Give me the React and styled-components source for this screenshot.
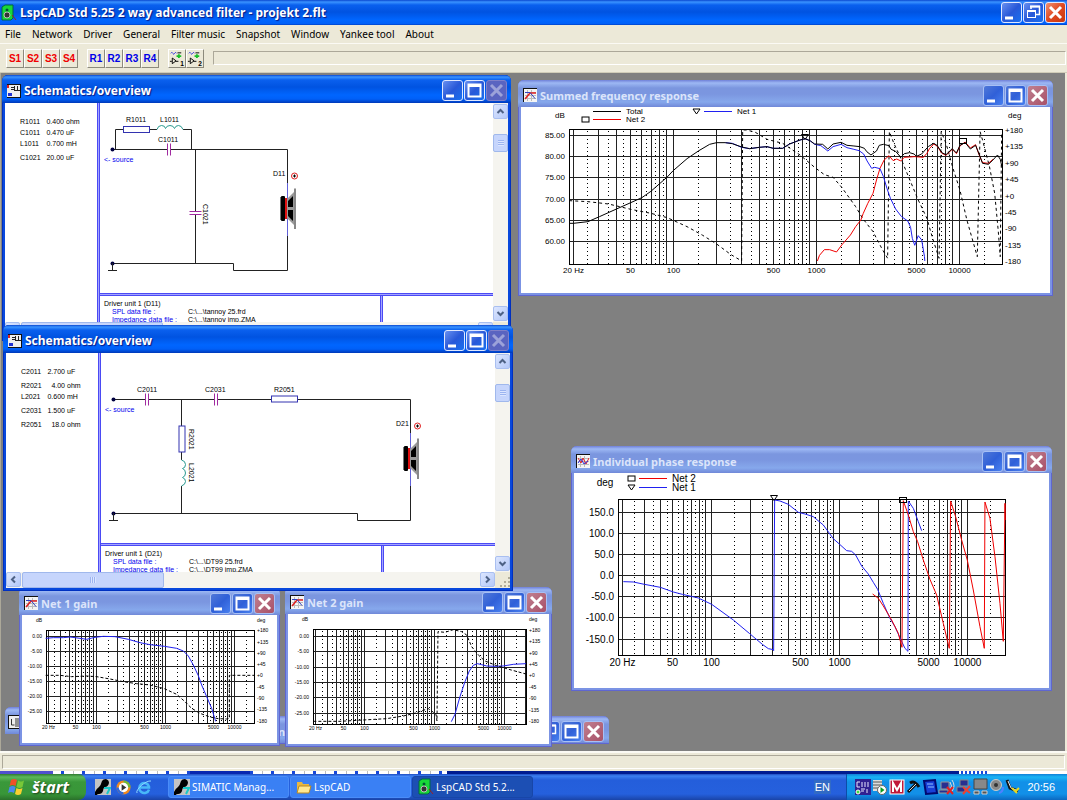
import { styled, createGlobalStyle, css } from "styled-components"

const GlobalStyle = createGlobalStyle`
  * { box-sizing: border-box; }
  body {
    margin: 0;
    background: #808080;
    font-family: "Liberation Sans", Arial, sans-serif;
    font-size: 11px;
    color: #000;
  }
  button { font-family: inherit; padding: 0; cursor: pointer; }
`

const DECADES = [10, 100, 1000, 10000];
const MENU = ["File", "Network", "Driver", "General", "Filter music", "Snapshot", "Window", "Yankee tool", "About"];
const DEGREES = ["+180", "+135", "+90", "+45", "+0", "-45", "-90", "-135", "-180"];

/* frequency plots: box is left, top, right, bottom of the frame */

const SUMMED = {
  box: [48, 22, 481, 157],
  x100: 152, decade: 143, font: 8,
  rows: [["85.00", 28], ["80.00", 49], ["75.00", 70], ["70.00", 92], ["65.00", 113], ["60.00", 134]],
  right: [23, 39, 56, 72, 89, 105, 121, 138, 154],
  unit: ["dB", 34, 11], unitRight: ["deg", 487, 11],
  transform: "translate(-6 -27) scale(0.3476 0.3333)",
  legend: [
    { name: "Total", color: "#000", x: 72, y: 4 },
    { name: "Net 2", color: "#f00000", x: 72, y: 12, mark: "square" },
    { name: "Net 1", color: "#2020f0", x: 183, y: 4, mark: "triangle" },
  ],
  marks: [["triangle", 284, 30], ["square", 442, 34]],
  traces: [
    { color: "#000", dash: "3 3", points: "156,362 210,365 269,372 333,388 391,400 438,413 495,440 540,466 580,492 620,523 652,543 655,150 665,150 690,156 725,178 770,190 820,225 862,262 890,284 915,292 940,322 980,380 1000,415 1030,455 1055,505 1072,535 1077,155 1090,190 1110,235 1130,285 1160,360 1185,415 1200,470 1220,535 1226,155 1240,190 1260,265 1280,330 1300,420 1330,530 1338,155 1345,180 1365,260 1380,340 1390,450 1396,530 1400,160" },
    { color: "#f00000", points: "870,543 876,526 890,509 905,509 925,516 940,495 965,465 980,440 995,420 1002,400 1015,370 1030,340 1040,300 1050,265 1062,240 1076,227 1088,242 1098,237 1110,243 1120,232 1150,230 1175,232 1185,220 1193,205 1205,192 1215,199 1228,220 1240,226 1258,208 1270,221 1280,198 1295,186 1310,204 1325,194 1335,224 1345,248 1362,250 1375,238" },
    { color: "#2020f0", points: "605,188 625,190 652,202 675,206 703,202 725,200 743,205 770,205 790,192 820,180 835,176 850,183 862,193 880,197 900,213 915,200 938,193 955,203 975,208 990,212 1003,222 1013,243 1026,265 1035,262 1050,266 1060,290 1070,325 1080,355 1095,387 1112,410 1130,423 1138,442 1143,475 1150,496 1160,467 1170,480 1178,530 1179,543" },
    { color: "#000", points: "156,430 168,430 210,425 243,410 292,387 333,368 365,353 391,334 415,312 438,291 455,272 495,236 529,212 560,193 580,188 605,188 625,191 652,201 675,206 703,202 725,200 743,205 770,205 790,192 820,180 835,176 850,183 862,192 885,193 900,207 915,192 938,187 955,196 975,198 992,200 1005,205 1012,215 1024,225 1040,213 1048,196 1060,193 1076,197 1082,208 1095,214 1110,232 1120,221 1135,218 1148,222 1155,229 1170,222 1180,210 1190,199 1205,190 1215,197 1228,218 1240,224 1258,206 1270,219 1280,196 1295,188 1310,207 1325,196 1335,222 1345,250 1362,253 1375,240 1388,225 1396,238 1402,265" },
  ],
};

const PHASE = {
  box: [44, 26, 431, 182],
  x100: 137, decade: 128, font: 10,
  rows: [["150.0", 39], ["100.0", 60], ["50.0", 81], ["0.0", 102], ["-50.0", 123], ["-100.0", 144], ["-150.0", 166]],
  right: [],
  unit: ["deg", 31, 13],
  transform: "translate(-9 -33) scale(0.3333 0.3333)",
  legend: [
    { name: "Net 2", color: "#f00000", x: 65, y: 5, mark: "square" },
    { name: "Net 1", color: "#2020f0", x: 65, y: 14, mark: "triangle" },
  ],
  marks: [["triangle", 200, 25], ["square", 329, 27]],
  traces: [
    { color: "#2020f0", points: "175,425 205,426 238,433 286,442 325,456 352,463 400,474 440,493 505,540 554,581 592,613 610,626 625,629 626,632 629,180 645,183 670,193 700,217 720,222 745,230 775,255 805,296 823,312 845,332 860,334 872,345 890,378 910,402 925,427 938,448 955,490 975,535 990,560 1008,600 1020,625 1029,634 1030,183 1045,205 1060,245 1070,272" },
    { color: "#f00000", points: "923,462 940,475 955,498 980,540 1000,580 1011,622 1015,182 1030,225 1045,275 1058,305 1075,360 1095,418 1115,465 1135,550 1148,605 1153,625 1157,183 1172,230 1190,300 1207,360 1225,450 1245,560 1258,625 1260,186 1275,235 1290,350 1305,490 1315,604 1320,190 1321,240" },
  ],
};

const GAIN_ROWS = ["0.00", "-5.00", "-10.00", "-15.00", "-20.00", "-25.00"];

const GAIN1 = {
  box: [24, 15, 232, 108],
  x100: 74, decade: 69, font: 5,
  rows: GAIN_ROWS.map((label, i) => [label, 21 + i * 15]),
  right: [15, 27, 38, 49, 60, 72, 83, 94, 106],
  unit: ["dB", 17, 7], unitRight: ["deg", 235, 7],
  transform: "translate(-22 -30) scale(0.3333 0.3333)",
  legend: [], marks: [],
  traces: [
    { color: "#2020f0", points: "137,160 160,158 190,158 210,156 240,160 260,163 285,157 310,154 345,155 385,163 420,173 450,179 493,184 530,190 550,198 565,213 580,240 595,272 605,300 620,335 635,370 647,409" },
    { color: "#000", dash: "3 2", points: "137,271 180,271 215,275 260,273 290,275 330,282 370,290 410,296 450,300 493,311 530,328 555,350 575,370 600,385 630,396 655,401 680,402 688,400 688,271 763,271" },
  ],
};

const GAIN2 = {
  box: [25, 15, 238, 110],
  x100: 76, decade: 70, font: 5,
  rows: GAIN_ROWS.map((label, i) => [label, Math.round(22 + i * 15.3)]),
  right: [16, 27, 39, 50, 61, 73, 84, 96, 107],
  unit: ["dB", 17, 7], unitRight: ["deg", 241, 7],
  transform: "translate(-8 -29) scale(0.3333 0.3333)",
  legend: [], marks: [],
  traces: [
    { color: "#2020f0", points: "514,410 525,388 540,335 555,290 568,258 580,241 592,236 605,239 620,243 645,244 670,243 700,238 738,236" },
    { color: "#000", dash: "3 2", points: "100,409 180,409 250,405 320,401 370,393 400,386 430,376 445,371 455,378 468,388 471,408 474,140 495,142 520,134 545,140 560,150 575,185 595,210 615,228 650,242 690,254 738,267" },
  ],
};

const Mark = ({ kind, x, y }) => kind === "square"
  ? <rect x={x - 3.5} y={y - 2.5} width="7" height="5" fill="none" stroke="#000" />
  : <path d={`M${x - 3.5} ${y - 2.5}h7l-3.5 5z`} fill="none" stroke="#000" />

const Plot = ({ data, title }) => {
  const { box, x100, decade, font, rows, right, unit, unitRight, legend, marks, traces } = data;
  const [l, t, r, b] = box;
  const px = (f) => Math.round(x100 + decade * Math.log10(f / 100)) + 0.5;
  const solid = DECADES.flatMap(d => [1, 2, 3, 4, 5, 6, 7, 8, 9].map(n => n * d)).filter(f => px(f) > l && px(f) < r);
  const dotted = DECADES.flatMap(d => [1.5, 2.5, 3.5, 4.5, 5.5, 6.5, 7.5, 8.5].map(n => n * d)).filter(f => px(f) > l && px(f) < r);
  const base = Math.round(font * 0.35);

  return <Drawing role="img" aria-label={title} fontSize={font}>
    {dotted.map(f => <line key={f} x1={px(f)} x2={px(f)} y1={t + 2} y2={b} stroke="#000" strokeDasharray="1 3" />)}
    {solid.map(f => <line key={f} x1={px(f)} x2={px(f)} y1={t} y2={b} stroke="#222" />)}
    {rows.map(([label, y]) => <g key={label}>
      <line x1={l} x2={r} y1={y + 0.5} y2={y + 0.5} stroke="#222" />
      <text x={l - 4} y={y + base} textAnchor="end">{label}</text>
    </g>)}
    <rect x={l + 0.5} y={t + 0.5} width={r - l} height={b - t} fill="none" stroke="#000" />
    {right.map((y, i) => <text key={y} x={r + 3} y={y + base}>{DEGREES[i]}</text>)}
    {[20, 50, 100, 500, 1000, 5000, 10000].map(f =>
      <text key={f} x={px(f)} y={b + font + 1} textAnchor="middle">{f === 20 ? "20 Hz" : f}</text>)}
    <text x={unit[1]} y={unit[2]} textAnchor={font === 8 ? "start" : "middle"}>{unit[0]}</text>
    {unitRight && <text x={unitRight[1]} y={unitRight[2]}>{unitRight[0]}</text>}
    {legend.map(({ name, color, x, y, mark }) => <g key={name}>
      {mark && <Mark kind={mark} x={x - 7.5} y={y + 0.5} />}
      <line x1={x} x2={x + 28} y1={y + 0.5} y2={y + 0.5} stroke={color} />
      <text x={x + 33} y={y + base}>{name}</text>
    </g>)}
    <g transform={data.transform}>
      {traces.map(({ color, dash, points }) =>
        <polyline key={points} points={points} fill="none" stroke={color} strokeDasharray={dash} vectorEffect="non-scaling-stroke" />)}
    </g>
    {marks.map(([kind, x, y]) => <Mark key={kind} kind={kind} x={x} y={y} />)}
  </Drawing>
}

/* schematic symbols */

const Capacitor = ({ x, y, upright }) => <g transform={`translate(${x} ${y})${upright ? " rotate(90)" : ""}`}>
  <rect x="-1" y="-3" width="3" height="6" fill="#fff" />
  <path d="M-1.5 -6v12M1.5 -6v12" stroke="#a02aa0" />
</g>

const Resistor = ({ x, y, upright }) => <g transform={`translate(${x} ${y})${upright ? " rotate(90)" : ""}`}>
  <rect x="-13" y="-3" width="26" height="6" fill="#fff" stroke="#3333b0" />
</g>

const Coil = ({ x, y, upright }) => <g transform={`translate(${x} ${y})${upright ? " rotate(90)" : ""}`}>
  <path d="M-13 0h26" stroke="#fff" strokeWidth="2" />
  <path d="M-13 0q1 -4 4.500 -4t4 3q1 -3 4.500 -3t4.500 3q1 -3 4 -3t4.500 4" fill="none" stroke="#2a9a90" />
</g>

const Speaker = ({ x, y }) => <g transform={`translate(${x} ${y})`}>
  <path d="M.5 -26V27" stroke="#6060d8" />
  <rect x="-7" y="-12" width="2" height="23" fill="#777" />
  <rect x="-6" y="-13" width="4" height="25" rx="1" fill="#000" />
  <rect x="-2" y="-11" width="2" height="21" fill="#e01010" />
  <path d="M0 -10L8 -18V17L0 9z" fill="#999" />
  <path d="M1 -8L6 -13V-2H1zM1 1H6V12L1 7z" fill="#000" />
  <path d="M8 -20.500V20" stroke="#888" strokeWidth="2" />
  <circle cx="7.500" cy="-33" r="3" fill="#fff" stroke="#e02020" />
  <path d="M6 -33h3M7.500 -34.500v3" stroke="#000" />
</g>

const Terminals = () => <g>
  <circle cx="12.500" cy="46.500" r="2" fill="#000040" />
  <circle cx="12.500" cy="160.500" r="2" fill="#000040" />
  <path d="M12.500 160V167.500M8 167.500H17" stroke="#222" />
  <text x="4" y="59" fill="#0000ee">{"<- source"}</text>
</g>

const CircuitOne = () => <Drawing role="img" aria-label="Net 1 schematic" fontSize="7">
  <path d="M12 46.500H187.500V167.500H133.500V160.500H12M15.500 46V26.500H91.500V46M95.500 46V160" fill="none" stroke="#222" />
  <Terminals />
  <Resistor x={36.5} y={26.5} />
  <Coil x={70} y={26.5} />
  <Capacitor x={69} y={46.5} />
  <Capacitor x={95.5} y={110} upright />
  <Speaker x={187} y={106} />
  <text x="26" y="19">R1011</text>
  <text x="60" y="19">L1011</text>
  <text x="58" y="39">C1011</text>
  <text x="173" y="73">D11</text>
  <text transform="translate(103 101) rotate(90)">C1021</text>
</Drawing>

const CircuitTwo = () => <Drawing role="img" aria-label="Net 2 schematic" fontSize="7">
  <path d="M12 46.500H309.500V167.500H256.500V160.500H12M80.500 46V160" fill="none" stroke="#222" />
  <Terminals />
  <Capacitor x={46} y={46.5} />
  <Capacitor x={115} y={46.5} />
  <Resistor x={183.5} y={46} />
  <Resistor x={81} y={86} upright />
  <Coil x={80.5} y={120} upright />
  <Speaker x={309} y={106} />
  <text x="36" y="39">C2011</text>
  <text x="104" y="39">C2031</text>
  <text x="173" y="39">R2051</text>
  <text x="295" y="73">D21</text>
  <text transform="translate(88 76) rotate(90)">R2021</text>
  <text transform="translate(88 110) rotate(90)">L2021</text>
</Drawing>

/* small icons */

const SpeakerIcon = () => <svg width="16" height="18" viewBox="0 0 16 18">
  <path d="M1 3l3-2h8v13l-2 2H1z" fill="#18d838" stroke="#064" />
  <circle cx="6" cy="6" r="1.500" fill="#053" />
  <circle cx="6" cy="11" r="3" fill="#333" stroke="#bbb" />
  <path d="M11 11l4 5" stroke="#a02020" />
</svg>

const SchemIcon = () => <svg width="14" height="14" viewBox="0 0 14 14">
  <rect width="14" height="14" fill="#eee" /><path d="M0 .5h14M0 13.500h14M13.500 0v14" stroke="#111" />
  <path d="M4 3.500h3M7.500 2v5M10.500 2v5M8 6.500h5M4 5.500h3" stroke="#222" fill="none" />
  <rect x="0" y="1" width="2" height="3" fill="#e02020" /><rect x="1" y="9" width="4" height="3" fill="#2030d0" />
</svg>

const CurveIcon = ({ phase }) => <svg width="14" height="14" viewBox="0 0 14 14">
  <rect width="14" height="14" fill="#f4f4f4" /><path d="M0 .5h14M.5 0v14" stroke="#111" />
  <path d="M2 4.500h11M2 7.500h11M2 10.500h11M4.500 2v11M8.500 2v11" stroke="#bbb" />
  {phase
    ? <><path d="M2 4l3 5 2-5 3 6 3-6" fill="none" stroke="#e02020" /><path d="M2 9l3-4 3 5 4-3" fill="none" stroke="#3030e0" /></>
    : <><path d="M2 11l5-6h6" fill="none" stroke="#e02020" strokeWidth="1.500" /><path d="M2 4.500h5l5 6" fill="none" stroke="#3040c0" /></>}
</svg>

const LetterIcon = () => <svg width="14" height="14" viewBox="0 0 14 14">
  <rect x=".5" y=".5" width="13" height="13" fill="#eee" stroke="#111" />
  <path d="M3.500 4v6h3M8 3v9M10 3v9M12 3v9" stroke="#333" fill="none" />
</svg>

const FilterIcon = ({ n }) => <svg width="17" height="17" viewBox="0 0 17 17" fontSize="7">
  <path d="M2 3q1-2 2 0t2 0 2 0" fill="none" stroke="#2020e0" /><path d="M9 2.500h4" stroke="#000" />
  <path d="M8 6h5M10.500 4v4" stroke="#18c028" strokeWidth="2" />
  <path d="M3.500 8v6l4-3zM1 11.500h2M7 11.500h3" fill="none" stroke="#000" />
  <text x="12" y="16">{n}</text>
</svg>

const Simatic = () => <svg width="16" height="16" viewBox="0 0 16 16">
  <rect width="16" height="16" fill="#c4c4c4" />
  <path d="M0 16V13Q1 10 4 8Q6 6 7 2Q8 0 11 0Q14 1 14 4Q13 8 10 8Q8 9 8 12Q7 15 4 15Q2 15 2 16z" fill="#000" />
  <path d="M9 9h6l-3 6" fill="none" stroke="#18c8c8" strokeWidth="2" />
</svg>

const Player = () => <svg width="15" height="15" viewBox="0 0 16 16">
  <circle cx="8" cy="8" r="7.500" fill="#f08a20" /><path d="M8 .5A7.500 7.500 0 0 1 15.500 8H8z" fill="#70b838" />
  <path d="M.5 8A7.500 7.500 0 0 0 8 15.500V8z" fill="#3068d8" /><circle cx="8" cy="8" r="5" fill="#fff" />
  <path d="M6 4.500l5 3.500-5 3.500z" fill="#333" />
</svg>

const Explorer = () => <svg width="16" height="16" viewBox="0 0 16 16">
  <path d="M13 10.500A5 5 0 1 1 13 7.500V8.500H4" fill="none" stroke="#48b8f8" strokeWidth="2.500" />
  <path d="M1 14C-1 11 10 1 15 2" fill="none" stroke="#90d8ff" />
</svg>

const Folder = () => <svg width="16" height="14" viewBox="0 0 16 14">
  <path d="M1 12V2h5l1 2h6v8z" fill="#e8b840" /><path d="M1 13l2-7h12l-2 7z" fill="#ffe890" stroke="#b88820" />
</svg>

const Flag = () => <svg width="19" height="18" viewBox="0 0 19 18">
  <path d="M3 2q3-2 6 0L7.500 8q-3-2-6 0z" fill="#f05028" /><path d="M10 2.500q3 2 6 0L14.500 9q-3 2-6 0z" fill="#78c838" />
  <path d="M1.500 9q3-2 6 0L6 15q-3-2-6 0z" fill="#4888f0" /><path d="M8.500 10q3 2 6 0L13 16q-3 2-6 0z" fill="#f8d030" />
</svg>

const Tray = () => <svg width="168" height="18" viewBox="0 0 168 18">
  <rect width="16" height="16" y="1" fill="#302090" />
  <path d="M5 4H2v5h3M7 4v5M10 4v5M13 4v5M6 11h4M6 13h3M12 11v4" stroke="#e8e8ff" fill="none" />
  <circle cx="3" cy="14" r="2" fill="#40e040" stroke="#fff" />
  <path d="M18 2h9v11h-9z" fill="#ddd" /><path d="M18 4h9M18 7h9M18 10h9" stroke="#555" />
  <circle cx="27" cy="12" r="4.500" fill="#fff" stroke="#666" /><path d="M25.500 9v6l4-3z" fill="#0a9a20" />
  <rect x="35" y="2" width="14" height="14" fill="#c01838" stroke="#fff" />
  <path d="M38 14V5l4 7 4-7v9" fill="none" stroke="#fff" strokeWidth="2" />
  <path d="M53 14l8-8M55 5q5-3 9 4" fill="none" stroke="#111" strokeWidth="3" /><path d="M54 13l7-7" stroke="#ddd" />
  <path d="M69 3l11-1 2 13-11 1z" fill="#1840d8" stroke="#000870" strokeWidth="2" /><path d="M72 6h6M73 9h6" stroke="#90c0ff" />
  <path d="M86 4h8v7h-8zM84 12h9v3h-9z" fill="#283090" stroke="#999" /><path d="M95 4q3 4 0 8M97 2q4 6 0 11" fill="none" stroke="#ddd" />
  <path d="M92 9l6 7M98 9l-6 7" stroke="#e82020" strokeWidth="2" />
  <path d="M105 2h8v6h-8zM102 9h8v5h-8z" fill="#283090" stroke="#888" /><path d="M108 9l7 6M115 8l-7 8" stroke="#f04030" strokeWidth="2" />
  <path d="M119 1h13v10h-13z" fill="#888" stroke="#444" /><path d="M119 13h5v3h-5zM127 13h5v3h-5z" fill="#555" stroke="#ccc" />
  <circle cx="141" cy="7" r="5.500" fill="#888" stroke="#ccc" /><circle cx="141" cy="7" r="2" fill="#333" /><path d="M144 15q4-1 4-6" fill="none" stroke="#5080ff" strokeWidth="2" />
  <path d="M152 2l3 8 8 3" fill="none" stroke="#111" strokeWidth="3" /><path d="M153 3l3 7 5 2" fill="none" stroke="#eee" />
  <path d="M160 14l4-4M157 10l5 5" stroke="#e8d820" strokeWidth="2" />
</svg>

const BUTTON_PATHS = {
  Minimize: <path d="M4 16h8" stroke="#fff" strokeWidth="3" />,
  Maximize: <><rect x="4.500" y="4.500" width="12" height="12" fill="none" stroke="#fff" strokeWidth="2" /><path d="M4 5.500h13" stroke="#fff" strokeWidth="3" /></>,
  Restore: <><path d="M8 7V4.500h8.500v8H13" fill="none" stroke="#fff" strokeWidth="1.500" /><rect x="4.500" y="8.500" width="8" height="7" fill="none" stroke="#fff" /><path d="M4 9h9M7 4.500h10" stroke="#fff" strokeWidth="2" /></>,
  Close: <path d="M5 5l11 11M16 5L5 16" stroke="#fff" strokeWidth="3" />,
};

const Caption = ({ buttons = ["Minimize", "Maximize", "Close"], inactive, closeOff }) => <Captions>
  {buttons.map(name => <CaptionButton key={name} aria-label={name} $close={name === "Close"} $inactive={inactive} $off={closeOff && name === "Close"}>
    <svg width="19" height="19" viewBox="1 1 19 19">{BUTTON_PATHS[name]}</svg>
  </CaptionButton>)}
</Captions>

const Arrow = ({ turn, label }) => <ScrollButton aria-label={label}>
  <svg width="9" height="9" viewBox="0 0 9 9"><path d="M1.500 6l3-3 3 3" fill="none" stroke="#4d6185" strokeWidth="2" transform={`rotate(${turn} 4.500 4.500)`} /></svg>
</ScrollButton>

const ChartWindow = ({ place, title, data, phase }) => <Window $place={place} aria-label={title}>
  <TitleBar>
    <CurveIcon phase={phase} />
    <Title>{title}</Title>
    <Caption inactive />
  </TitleBar>
  <Body><Plot data={data} title={title} /></Body>
</Window>

const SchematicWindow = ({ place, parts, driver, files, children }) => <Window $place={place} $active aria-label="Schematics/overview">
  <TitleBar $active>
    <SchemIcon />
    <Title $active>Schematics/overview</Title>
    <Caption closeOff />
  </TitleBar>
  <Body>
    <Columns>
      <Parts>
        <table>
          {parts.map((group, i) => <tbody key={i}>
            {group.map(([name, value, unit]) => <tr key={name}><th scope="row">{name}</th><td>{value}</td><td>{unit}</td></tr>)}
          </tbody>)}
        </table>
      </Parts>
      <Splitter />
      <Sheet>
        {children}
        <Splitter $flat />
        <Lower>
          <DriverInfo>
            <h2>{driver}</h2>
            <dl>
              <dt>SPL data file :</dt><dd>{files[0]}</dd>
              <dt>Impedance data file :</dt><dd>{files[1]}</dd>
            </dl>
          </DriverInfo>
          <Splitter />
          <Spare />
        </Lower>
      </Sheet>
      <VScroll>
        <Arrow turn={0} label="Scroll up" />
        <VThumb />
        <Arrow turn={180} label="Scroll down" />
      </VScroll>
    </Columns>
    <HScroll>
      <Arrow turn={270} label="Scroll left" />
      <HThumb />
      <Arrow turn={90} label="Scroll right" />
      <Grip />
    </HScroll>
  </Body>
</Window>

export default function App() {
  return <Screen>
    <GlobalStyle />
    <MainTitle>
      <SpeakerIcon />
      <Title as="h1" $active>LspCAD Std 5.25 2 way advanced filter - projekt 2.flt</Title>
      <Caption buttons={["Minimize", "Restore", "Close"]} />
    </MainTitle>
    <MenuBar>
      {MENU.map(name => <MenuItem key={name}>{name}</MenuItem>)}
    </MenuBar>
    <ToolBar>
      <ToolGroup>{["S1", "S2", "S3", "S4"].map(n => <Tool key={n} $color="#f00000">{n}</Tool>)}</ToolGroup>
      <ToolGroup>{["R1", "R2", "R3", "R4"].map(n => <Tool key={n} $color="#0000e8">{n}</Tool>)}</ToolGroup>
      <ToolGroup>{[1, 2].map(n => <Tool key={n} aria-label={`Filter ${n}`}><FilterIcon n={n} /></Tool>)}</ToolGroup>
      <Sunken />
    </ToolBar>

    <Desktop>
      <Window $place={[5, 634, 160, 27]}>
        <TitleBar $small><LetterIcon /></TitleBar>
      </Window>
      <Window $place={[256, 643, 353, 28]}>
        <TitleBar>
          <CurveIcon />
          <Title>n</Title>
          <Caption buttons={["Restore", "Maximize", "Close"]} inactive />
        </TitleBar>
      </Window>
      <ChartWindow place={[19, 515, 261, 158]} title="Net 1 gain" data={GAIN1} />
      <ChartWindow place={[285, 514, 267, 160]} title="Net 2 gain" data={GAIN2} />
      <ChartWindow place={[518, 7, 535, 216]} title="Summed frequency response" data={SUMMED} />
      <ChartWindow place={[571, 373, 481, 245]} title="Individual phase response" data={PHASE} phase />
      <SchematicWindow
        place={[2, 2, 509, 266]}
        parts={[[["R1011", "0.400", "ohm"], ["C1011", "0.470", "uF"], ["L1011", "0.700", "mH"]], [["C1021", "20.00", "uF"]]]}
        driver="Driver unit 1 (D11)"
        files={["C:\\...\\tannoy 25.frd", "C:\\...\\tannoy imp.ZMA"]}
      ><CircuitOne /></SchematicWindow>
      <SchematicWindow
        place={[3, 252, 510, 266]}
        parts={[[["C2011", "2.700", "uF"]], [["R2021", "4.00", "ohm"], ["L2021", "0.600", "mH"]], [["C2031", "1.500", "uF"]], [["R2051", "18.0", "ohm"]]]}
        driver="Driver unit 1 (D21)"
        files={["C:\\...\\DT99 25.frd", "C:\\...\\DT99 imp.ZMA"]}
      ><CircuitTwo /></SchematicWindow>
    </Desktop>

    <StatusBar><Sunken /></StatusBar>
    <Sliver />
    <TaskBar>
      <Start><Flag />štart</Start>
      <Quick><Simatic /><Player /><Explorer /></Quick>
      <Tasks>
        <Task><Simatic />SIMATIC Manag...</Task>
        <Task><Folder />LspCAD</Task>
        <Task $pressed><SpeakerIcon />LspCAD Std 5.2...</Task>
      </Tasks>
      <Language>EN</Language>
      <TrayArea><Tray /><time>20:56</time></TrayArea>
    </TaskBar>
  </Screen>
}

const Screen = styled.div`
  display: flex;
  flex-direction: column;
  height: 100vh;
  overflow: hidden;
`

const blueBar = css`
  background: linear-gradient(#0a48d0, #3a93ff 2px, #0a60ee 5px, #0053e1 12px, #0066ff 20px, #0060f8 24px, #0038b8);
`

const paleBar = css`
  background: linear-gradient(#7080d8, #9db8f4 3px, #7b96df 8px, #7b96e0 14px, #86a8ec 22px, #7088d8);
`

const MainTitle = styled.header`
  display: flex;
  align-items: center;
  height: 25px;
  flex: none;
  padding: 0 1px 0 1px;
  gap: 3px;
  ${blueBar}
`

const Title = styled.h2`
  flex: 1;
  margin: 0;
  font: bold ${p => p.$active ? 12 : 11}px "Noto Sans", sans-serif;
  color: ${p => p.$active ? "#fff" : "#dbe4fa"};
  text-shadow: ${p => p.$active ? "1px 1px 1px #0a1883" : "none"};
  white-space: nowrap;
`

const MenuBar = styled.nav`
  display: flex;
  align-items: center;
  flex: none;
  height: 18px;
  padding-left: 5px;
  gap: 11px;
  background: #ece9d8;
`

const MenuItem = styled.button`
  border: 0;
  background: none;
  font: 10px "Noto Sans", sans-serif;
`

const ToolBar = styled.div`
  display: flex;
  align-items: center;
  flex: none;
  height: 30px;
  padding: 0 1px 0 6px;
  gap: 9px;
  background: #ece9d8;
  border-top: 1px solid #fbfaf4;
  border-bottom: 1px solid #d0ccb8;
`

const ToolGroup = styled.div`
  display: flex;
`

const Tool = styled.button`
  display: flex;
  align-items: center;
  justify-content: center;
  width: 18px;
  height: 19px;
  background: #ece9d8;
  border: 1px solid;
  border-color: #fff #8c8a7c #8c8a7c #fff;
  color: ${p => p.$color};
  font-size: 10px;
  font-weight: bold;
`

const Sunken = styled.div`
  flex: 1;
  height: 14px;
  border: 1px solid;
  border-color: #aca899 #fff #fff #aca899;
`

const Desktop = styled.main`
  position: relative;
  flex: 1;
  background: #808080;
  border-left: 1px solid #aca899;
  border-right: 2px solid #ece9d8;
  overflow: hidden;
`

const Window = styled.section`
  position: absolute;
  left: ${p => p.$place[0] - 1}px;
  top: ${p => p.$place[1]}px;
  width: ${p => p.$place[2]}px;
  height: ${p => p.$place[3]}px;
  display: flex;
  flex-direction: column;
  border-radius: 6px 6px 0 0;
  overflow: hidden;
  padding: 0 3px 3px;
  background: ${p => p.$active ? "#0848dc" : "#7b93e4"};
  box-shadow: inset 0 0 0 1px ${p => p.$active ? "#0030c0" : "#5f66d0"};
`

const TitleBar = styled.div`
  display: flex;
  align-items: center;
  flex: none;
  height: ${p => p.$active ? 28 : 27}px;
  margin: 0 -3px;
  padding: 3px ${p => p.$active ? 4 : 5}px 0 ${p => p.$small ? 3 : 5}px;
  gap: 3px;
  ${p => p.$active ? blueBar : paleBar}
`

const Captions = styled.div`
  display: flex;
  gap: 1px;
`

const buttonFill = p => {
  if (p.$off) return "#5a64c0";
  if (p.$close) return p.$inactive ? "linear-gradient(135deg, #c08090, #a85068)" : "linear-gradient(135deg, #f09070, #e04820 50%, #c83810)";
  return p.$inactive ? "linear-gradient(135deg, #5078d8, #3060d8 50%, #4880f0)" : "linear-gradient(135deg, #6890f0, #2858d8 50%, #1870f0)";
}

const CaptionButton = styled.button`
  display: block;
  width: 21px;
  height: 21px;
  background: ${buttonFill};
  border: 1px solid ${p => p.$off ? "#8080c8" : p.$inactive ? "#a8c0f4" : "#e0e8ff"};
  border-radius: 3px;
  svg { display: block; opacity: ${p => p.$off ? 0.4 : 1}; }
`

const Body = styled.div`
  flex: 1;
  min-height: 0;
  display: flex;
  flex-direction: column;
  background: #fff;
`

const Drawing = styled.svg`
  display: block;
  flex: 1;
  width: 100%;
  min-height: 0;
`

const Columns = styled.div`
  flex: 1;
  min-height: 0;
  display: flex;
`

const Splitter = styled.div`
  flex: none;
  ${p => p.$flat ? "height" : "width"}: 3px;
  background: #a5a5ff;
  border: solid #4a4af4;
  border-width: ${p => p.$flat ? "1px 0" : "0 1px"};
`

const Parts = styled.div`
  width: 92px;
  flex: none;
  padding: 13px 0 0 15px;
  font-size: 7px;
  line-height: 11px;
  table { border-collapse: collapse; }
  th, td { padding: 0; font-weight: normal; text-align: left; }
  th { width: 25px; }
  td:nth-child(2) { width: 19px; text-align: right; }
  td:last-child { padding-left: 2px; }
  tbody + tbody tr:first-child > * { padding-top: 3px; }
`

const Sheet = styled.div`
  flex: 1;
  min-width: 0;
  display: flex;
  flex-direction: column;
`

const Lower = styled.div`
  display: flex;
  flex: none;
  height: 26px;
  overflow: hidden;
`

const DriverInfo = styled.div`
  flex: 5;
  padding: 4px 0 0 4px;
  font-size: 7px;
  line-height: 8px;
  h2 { margin: 0; font: inherit; }
  dl { display: grid; grid-template-columns: 76px 1fr; margin: 0 0 0 8px; }
  dt { color: #0000ee; }
  dd { margin: 0; }
`

const Spare = styled.div`
  flex: 2;
`

const VScroll = styled.div`
  display: flex;
  flex-direction: column;
  width: 15px;
  flex: none;
  justify-content: space-between;
  padding: 1px 0;
  background: #f5f4ef;
`

const ScrollButton = styled.button`
  display: flex;
  align-items: center;
  justify-content: center;
  width: 15px;
  height: 15px;
  flex: none;
  border: 1px solid #a9bff0;
  border-radius: 2px;
  background: linear-gradient(135deg, #dce6ff, #b4c8f8);
`

const thumb = css`
  border: 1px solid #a0b8ec;
  border-radius: 2px;
`

const VThumb = styled.div`
  height: 18px;
  margin: 15px 0 auto;
  ${thumb}
  background: repeating-linear-gradient(#9cb4f0 0 1px, #dce6ff 1px 2px) center / 6px 6px no-repeat #c6d5fc;
`

const HScroll = styled.div`
  display: flex;
  height: 16px;
  flex: none;
  background: #f5f4ef;
`

const HThumb = styled.div`
  width: 142px;
  margin: 0 auto 0 1px;
  ${thumb}
  background: repeating-linear-gradient(90deg, #9cb4f0 0 1px, #dce6ff 1px 2px) center / 6px 6px no-repeat #c6d5fc;
`

const Grip = styled.div`
  width: 15px;
  background: #ece9d8;
  background-image: linear-gradient(135deg, #ece9d8 60%, transparent 60%), radial-gradient(circle, #b0ac98 1px, transparent 1px);
  background-size: 100% 100%, 4px 4px;
`

const StatusBar = styled.footer`
  display: flex;
  align-items: center;
  flex: none;
  height: 20px;
  padding: 1px 2px;
  background: #ece9d8;
  border-top: 2px solid #fbfaf4;
`

/* part of the window that lies under this one */
const Sliver = styled.div`
  flex: none;
  height: 3px;
  background:
    linear-gradient(#001c90, #001c90) 447px 0 / 512px 3px no-repeat,
    repeating-linear-gradient(90deg, #fff 0 2px, #1848d8 2px 4px) 959px 0 / 28px 3px no-repeat,
    linear-gradient(#5050d0, #5050d0) 0 0 / 53px 3px no-repeat,
    linear-gradient(#0828b0, #0828b0) 190px 0 / 60px 3px no-repeat,
    repeating-linear-gradient(90deg, #fff 0 8px, #1848d8 8px 11px, #fff 11px 20px, #bbb 20px 21px) 53px 0 / 394px 3px no-repeat,
    #fff;
`

const TaskBar = styled.footer`
  display: flex;
  flex: none;
  height: 26px;
  background: linear-gradient(#1f4cc0, #3c80f0 2px, #245edb 6px, #2560dd 20px, #1a44a8);
  color: #fff;
`

const Start = styled.button`
  display: flex;
  align-items: center;
  width: 86px;
  padding-left: 8px;
  gap: 5px;
  border: 0;
  border-radius: 0 8px 8px 0;
  background: linear-gradient(#2f7a2f, #5cb85a 3px, #3a983a 8px, #389638 20px, #2a702a);
  color: #fff;
  font: italic bold 16px "Noto Sans", sans-serif;
  text-shadow: 1px 1px 2px #1c401c;
`

const Quick = styled.div`
  display: flex;
  align-items: center;
  width: 82px;
  padding-left: 9px;
  gap: 5px;
`

const Tasks = styled.div`
  display: flex;
  flex: 1;
  gap: 1px;
  padding: 2px 0 2px;
`

const Task = styled.button`
  display: flex;
  align-items: center;
  width: 121px;
  padding-left: 5px;
  gap: 2px;
  border: 1px solid ${p => p.$pressed ? "#1846a8" : "#4a8cf8"};
  border-radius: 3px;
  background: ${p => p.$pressed ? "#1c4fb4" : "#3a80f4"};
  color: #fff;
  font: 10px "Noto Sans", sans-serif;
`

const Language = styled.div`
  align-self: center;
  margin-right: 15px;
  padding: 1px 1px;
  background: #316ac5;
`

const TrayArea = styled.div`
  display: flex;
  align-items: center;
  justify-content: space-between;
  width: 221px;
  padding: 0 12px 0 8px;
  border-left: 1px solid #0c4ca8;
  background: linear-gradient(#1080d8, #18b4f4 3px, #1290e8 8px, #1290e8 20px, #0c68c0);
`
